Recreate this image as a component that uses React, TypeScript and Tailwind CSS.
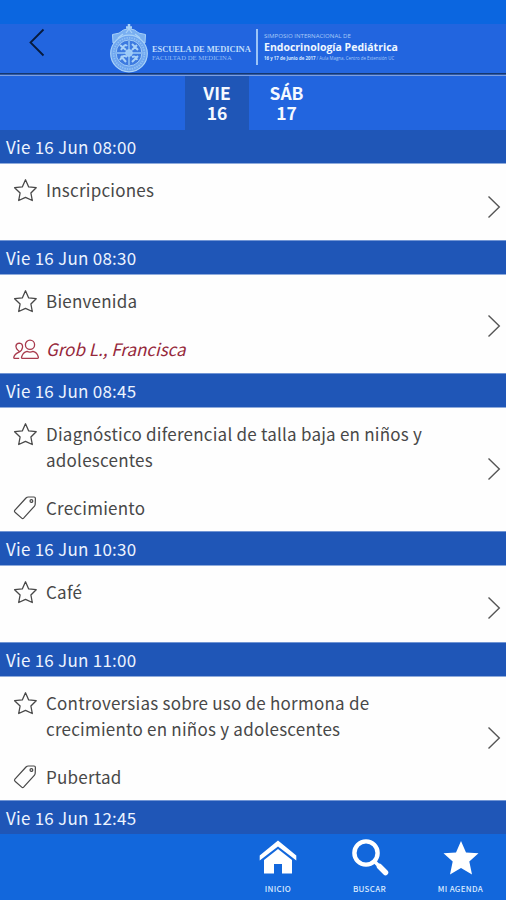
import React from 'react';

const ink = '#484848';

function StarOutline() {
  return (
    <svg width="24" height="24" viewBox="0 0 24 24" fill="none" stroke={ink} strokeWidth="1.3" strokeLinejoin="round">
      <path d="M12.5 1.8 L15.7 8.9 L23.2 9.7 L17.9 15 L19.3 22.5 L12.5 19.3 L5.7 22.5 L7.1 15 L1.6 9.7 L9.3 8.9 Z" />
    </svg>
  );
}

function Tag() {
  return (
    <svg width="24" height="24" viewBox="0 0 24 24" fill="none" stroke={ink} strokeWidth="1.2" strokeLinejoin="round">
      <path d="M13 2 Q14 1 15.4 1 L21 1 Q22.4 1 22.4 2.4 L22.2 8.2 Q22.1 9.4 21.3 10.3 L10.6 22.1 Q9.7 23 8.7 22.1 L2 16.2 Q1 15.2 1.9 14.2 Z" />
      <circle cx="18.4" cy="5" r="1.4" />
    </svg>
  );
}

function People() {
  return (
    <svg width="26" height="22" viewBox="0 0 26 22" fill="none" stroke="#a83a4c" strokeWidth="1.3" strokeLinejoin="round">
      <circle cx="17" cy="5.8" r="4.6" />
      <path d="M9.2 19.4 Q8.3 19.4 8.6 18 Q9.8 13.3 14 12.3 Q17 13.8 20 12.3 Q24.3 13.3 25.3 18 Q25.5 19.4 24.6 19.4 Z" />
      <path d="M2.9 7.2 Q3.2 4.3 6.4 4.2 Q9.7 4.6 9.6 8 Q9.2 11.6 6 13.2 Q1.7 15 .8 18.2 Q.6 19.4 1.8 19.4 H6.2 M2.9 7.2 Q3 9.6 5 11.2 Q6.5 12 6 13.2" />
    </svg>
  );
}

function Crest() {
  return (
    <svg width="40" height="50" viewBox="0 0 40 50" fill="none" stroke="#a9d2f8">
      <path d="M20 0 V7 M17 3.5 H23" strokeWidth="2.5" />
      <path d="M4 19 L3.5 10.5 Q11 10 14.5 6 Q20 3 25.5 6 Q29 10 36.5 10.5 L36 19 Q20 8 4 19 Z" fill="#79aff1" strokeWidth="1" />
      <path d="M9 14 L14 10 M17 9 L20 5 L23 9 M26 10 L31 14" strokeWidth="1.2" />
      <ellipse cx="20" cy="29.5" rx="18.3" ry="18.3" fill="#6ea5ef" strokeWidth="1.2" />
      <ellipse cx="20" cy="29.5" rx="15.4" ry="15.6" stroke="#8fc0f5" strokeWidth="1.8" strokeDasharray="1.4 1.1" />
      <ellipse cx="20" cy="29" rx="12.9" ry="13" fill="#3d7ae0" strokeWidth=".9" />
      <path d="M20 17 V41 M8 29 H32" stroke="#82b6f2" strokeWidth="1.8" />
      <path d="M11 21 L17 26 M12 26 Q16 19 18 22 M23 20 L29 26 M23 26 L28 21 M11 36 Q14 30 18 33 M12 32 L17 38 M23 33 Q27 31 28 36 M23 38 L29 32" strokeWidth="2" />
      <circle cx="20" cy="29" r="3.4" fill="#9bcaf8" strokeWidth=".8" />
    </svg>
  );
}

type Session = {
  time: string;
  height: string;
  arrow: string;
  lines: string[];
  speaker?: string;
  tag?: string;
};

const sessions: Session[] = [
  { time: '08:00', height: 'h-[110px]', arrow: 'mt-[9px]', lines: ['Inscripciones'] },
  { time: '08:30', height: 'h-[133px]', arrow: 'mt-[3px]', lines: ['Bienvenida'], speaker: 'Grob L., Francisca' },
  { time: '08:45', height: 'h-[158px]', arrow: 'mt-[-1px]', lines: ['Diagnóstico diferencial de talla baja en niños y', 'adolescentes'], tag: 'Crecimiento' },
  { time: '10:30', height: 'h-[111px]', arrow: 'mt-[8px]', lines: ['Café'] },
  { time: '11:00', height: 'h-[158px]', arrow: 'mt-[-1px]', lines: ['Controversias sobre uso de hormona de', 'crecimiento en niños y adolescentes'], tag: 'Pubertad' },
];

function TimeBar({ time, first }: { time: string; first?: boolean }) {
  return (
    <div
      className={`shrink-0 border-b border-b-[#8fabdb] bg-[#1f56b7] pl-[6px] text-[17px] tracking-[0.25px] text-[#edf4ff] ${
        first ? 'h-[34px] leading-[33px]' : 'h-[35px] border-t border-t-[#7195d4] leading-[33px]'
      }`}
    >
      Vie 16 Jun {time}
    </div>
  );
}

function SessionBlock({ s, first }: { s: Session; first: boolean }) {
  return (
    <section className={`flex shrink-0 flex-col ${s.height}`}>
      <TimeBar time={s.time} first={first} />
      <div className="flex flex-1 items-center bg-[#fefefe] pr-[5px]">
        <div className="flex flex-1 flex-col self-stretch pl-[13px] pt-[13px]">
          <div className="flex">
            <div className="w-[33px] pt-px"><StarOutline /></div>
            <div className="text-[17px] font-normal leading-[26px] tracking-[0.23px] text-[#484848]">
              {s.lines.map((l) => <p key={l} className="whitespace-nowrap">{l}</p>)}
            </div>
          </div>
          {s.speaker && (
            <div className="mt-[22px] flex">
              <div className="w-[33px] pt-[3px]"><People /></div>
              <p className="text-[17px] italic leading-[26px] text-[#96283b]">{s.speaker}</p>
            </div>
          )}
          {s.tag && (
            <div className="mt-[22px] flex">
              <div className="w-[33px] pt-px"><Tag /></div>
              <p className="text-[17px] leading-[26px] tracking-[0.23px] text-[#484848]">{s.tag}</p>
            </div>
          )}
        </div>
        <svg className={s.arrow} width="14" height="24" viewBox="0 0 14 24" fill="none" stroke="#555" strokeWidth="1.4">
          <path d="M1.5 1.5 L12.3 12 L1.5 22.5" />
        </svg>
      </div>
    </section>
  );
}

export default function App() {
  return (
    <div className="flex h-[900px] w-[506px] flex-col overflow-hidden bg-[#1267dc] font-['Noto_Sans_CJK_SC','Noto_Sans',sans-serif]">
      <div className="h-6 shrink-0 bg-[#0b66e0]" />
      <header className="flex h-[49px] shrink-0 bg-[#2265df]">
        <svg className="ml-[28px] mt-[4px]" width="18" height="30" viewBox="0 0 18 30" fill="none" stroke="#071a3c" strokeWidth="1.8">
          <path d="M15.5 1.5 L2.5 14.5 L15.5 27.5" />
        </svg>
        <div className="ml-[63px] w-[43px]"><Crest /></div>
        <div className="w-[104px] pt-[20px] font-['Liberation_Serif',serif] text-[#bfdcfb]">
          <p className="whitespace-nowrap text-[8.5px] font-bold leading-[10px] tracking-[-0.1px]">ESCUELA DE MEDICINA</p>
          <p className="whitespace-nowrap text-[6.7px] leading-[7px] text-[#94bdf5]">FACULTAD DE MEDICINA</p>
        </div>
        <div className="mt-[5px] h-[36px] w-[2px] bg-[#9cc4f7]" />
        <div className="pl-[6px] pt-[8px] font-['Open_Sans',sans-serif] text-[#a8caf7]">
          <p className="whitespace-nowrap text-[6.1px] leading-[8px]">SIMPOSIO INTERNACIONAL DE</p>
          <p className="whitespace-nowrap text-[10.5px] font-bold leading-[14px] text-[#eef7ff]">Endocrinología Pediátrica</p>
          <p className="whitespace-nowrap text-[4.4px] leading-[8px]"><b className="text-[#d6e8ff]">16 y 17 de Junio de 2017</b> / Aula Magna, Centro de Extensión UC</p>
        </div>
      </header>
      <div className="h-[3px] shrink-0 border-b border-t border-b-[#7c9fe0] border-t-[#15376f] bg-[#2f59a5]" />
      <nav className="flex h-[54px] shrink-0 bg-[#2265df] pl-[185px] text-center text-[17.5px] font-bold leading-[20px] text-[#f5f9ff]">
        <p className="w-[64px] bg-[#1f56b7] pt-[7px]">VIE<br />16</p>
        <p className="w-[75px] pt-[7px]">SÁB<br />17</p>
      </nav>
      <main className="flex h-[704px] shrink-0 flex-col overflow-hidden">
        {sessions.map((s, i) => <SessionBlock key={s.time} s={s} first={i === 0} />)}
        <TimeBar time="12:45" />
      </main>
      <footer className="flex h-[66px] shrink-0 bg-[#1267dc] pl-[232px] text-center text-[8px] font-medium leading-[12px] tracking-[0.3px] text-[#d9eaff]">
        <div className="flex w-[92px] flex-col items-center pt-[6px]">
          <svg width="38" height="36" viewBox="0 0 38 36" fill="white">
            <path d="M19 .5 L37.3 15.5 V20.5 L19 6.5 L.7 20.5 V15.5 Z" />
            <path d="M19 9 L33 20 V33.5 H23 V24 H15 V33.5 H5 V20 Z" />
          </svg>
          <p className="mt-[7px]">INICIO</p>
        </div>
        <div className="flex w-[91px] flex-col items-center pt-[4px]">
          <svg width="38" height="38" viewBox="0 0 38 38" fill="none" stroke="white">
            <circle cx="15" cy="15" r="11.6" strokeWidth="4.4" />
            <path d="M23.5 23.5 L29 29" strokeWidth="3.5" />
            <path d="M28.5 28.5 L34.5 34.5" strokeWidth="5.5" strokeLinecap="round" />
          </svg>
          <p className="mt-[7px]">BUSCAR</p>
        </div>
        <div className="flex w-[91px] flex-col items-center pt-[6px]">
          <svg width="38" height="36" viewBox="0 0 38 36" fill="white">
            <path d="M19 1 L24 12.5 L36.5 13.3 L27.3 21.5 L30 34.5 L19 28 L8 34.5 L10.7 21.5 L1.5 13.3 L14 12.5 Z" />
          </svg>
          <p className="mt-[7px] whitespace-nowrap">MI AGENDA</p>
        </div>
      </footer>
    </div>
  );
}
